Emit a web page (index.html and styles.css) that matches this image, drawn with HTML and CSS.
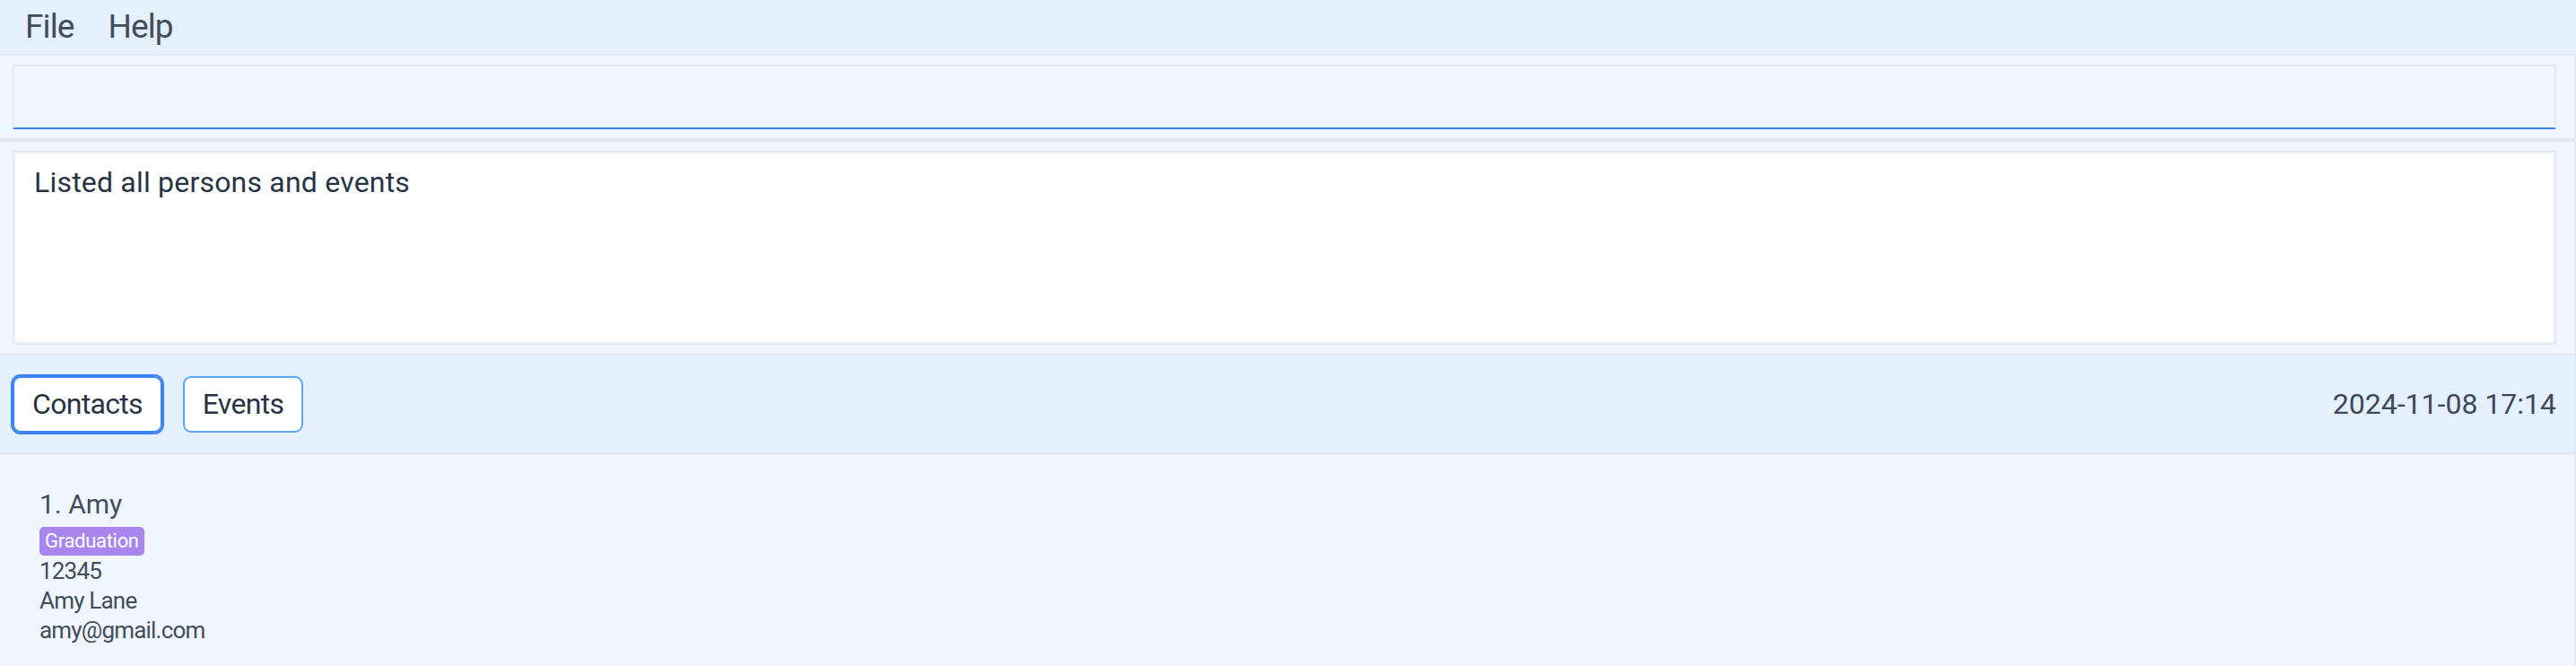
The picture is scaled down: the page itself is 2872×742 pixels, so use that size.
FILE: index.html
```html
<!DOCTYPE html>
<html>
<head>
<meta charset="utf-8">
<link rel="stylesheet" href="styles.css">
</head>
<body>
<div class="app">
  <nav class="menubar">
    <span class="menu-item">File</span>
    <span class="menu-item">Help</span>
  </nav>
  <main class="content">
    <section class="command-section">
      <div class="command-input"></div>
    </section>
    <section class="result-section">
      <div class="result-box">
        <div class="result-inner">Listed all persons and events</div>
      </div>
    </section>
    <section class="tabbar">
      <div class="tabs">
        <button class="tab tab-active">Contacts</button>
        <button class="tab">Events</button>
      </div>
      <div class="clock">2024-11-08 17:14</div>
    </section>
    <section class="list">
      <div class="card">
        <div class="card-name">1. Amy</div>
        <div class="tags"><span class="tag">Graduation</span></div>
        <div class="card-line">12345</div>
        <div class="card-line">Amy Lane</div>
        <div class="card-line">amy@gmail.com</div>
      </div>
    </section>
  </main>
</div>
</body>
</html>
```
FILE: styles.css
```css
* { box-sizing: border-box; }
html, body {
  margin: 0;
  padding: 0;
  height: 100%;
  background: #eff6ff;
  font-family: "Roboto", "Noto Sans", sans-serif;
}
.app {
  width: 2872px;
  height: 742px;
  display: flex;
  flex-direction: column;
  overflow: hidden;
}
.menubar {
  height: 62px;
  flex: none;
  display: flex;
  align-items: center;
  background: #e4f0fd;
  border-bottom: 2px solid #e1e8f0;
  padding: 0 0 2px 28px;
  gap: 38px;
}
.menu-item {
  font-size: 37px;
  letter-spacing: -0.9px;
  color: #434c5b;
}
.content {
  flex: 1;
  display: flex;
  flex-direction: column;
  border-right: 2px solid #e1e8f0;
  min-height: 0;
}
.command-section {
  flex: none;
  background: #eff6ff;
  padding: 10px 20px 10px 14px;
  border-bottom: 4px solid #e1e8f0;
}
.command-input {
  height: 72px;
  border: 2px solid #e1e8f0;
  border-bottom: 2px solid #3b82f6;
  background: #eff6ff;
}
.result-section {
  flex: none;
  background: #eff6ff;
  padding: 10px 20px 10px 14px;
  border-bottom: 2px solid #e1e8f0;
}
.result-box {
  height: 216px;
  border: 2px solid #e1e8f0;
  padding: 2px;
  background: #f3f8fe;
  display: flex;
}
.result-inner {
  flex: 1;
  background: #ffffff;
  padding: 11px 20px;
  font-size: 32px;
  line-height: 40px;
  letter-spacing: 0.2px;
  color: #283345;
}
.tabbar {
  flex: none;
  height: 110px;
  background: #e4f0fd;
  border-bottom: 2px solid #e1e8f0;
  display: flex;
  align-items: center;
  justify-content: space-between;
  padding: 0 20px 0 14px;
}
.tabs {
  display: flex;
  gap: 23px;
}
.tab {
  font-family: inherit;
  font-size: 32px;
  line-height: 39px;
  letter-spacing: -0.7px;
  padding: 10px 20px;
  background: #ffffff;
  color: #283345;
  border: 2px solid #60a5fa;
  border-radius: 9px;
}
.tab-active {
  border-color: #3b82f6;
  outline: 2px solid #3b82f6;
}
.clock {
  font-size: 32px;
  color: #3e4858;
}
.list {
  flex: 1;
  background: #eff6ff;
}
.card {
  padding: 38px 44px 0;
  color: #434c5b;
}
.card-name {
  font-size: 30px;
  line-height: 36px;
}
.tags {
  display: flex;
  margin-top: 7px;
  margin-bottom: 1px;
}
.tag {
  background: #a985ee;
  color: #ffffff;
  font-size: 22px;
  line-height: 32px;
  letter-spacing: -0.3px;
  padding: 0 6px;
  border-radius: 5px;
}
.card-line {
  font-size: 26px;
  line-height: 33px;
  letter-spacing: -0.8px;
}
```
